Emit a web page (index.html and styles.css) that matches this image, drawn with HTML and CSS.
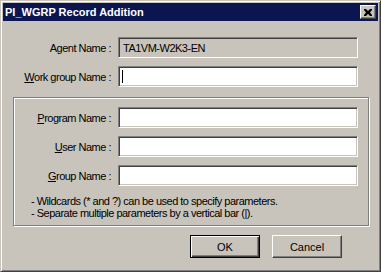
FILE: index.html
```html
<!DOCTYPE html>
<html lang="en">
<head>
    <meta charset="UTF-8">
    <title>PI_WGRP Record Addition</title>
    <link rel="stylesheet" href="styles.css">
</head>
<body>
    <div class="window">
        <div class="titlebar">
            <span class="title">PI_WGRP Record Addition</span>
            <span class="close">
                <svg width="8" height="7" viewBox="0 0 8 7">
                    <path d="M0 0h2l2 2 2-2h2v1L6 3.5 8 6v1H6L4 5 2 7H0V6l2-2.5L0 1z" fill="#000"/>
                </svg>
            </span>
        </div>

        <div class="content">
            <div class="form-grid top">
                <label class="lbl">Agent Name :</label>
                <div class="field disabled">TA1VM-W2K3-EN</div>

                <label class="lbl"><u>W</u>ork group Name :</label>
                <div class="field"><span class="caret"></span></div>
            </div>

            <div class="group">
                <div class="form-grid inner">
                    <label class="lbl"><u>P</u>rogram Name :</label>
                    <div class="field"></div>

                    <label class="lbl"><u>U</u>ser Name :</label>
                    <div class="field"></div>

                    <label class="lbl"><u>G</u>roup Name :</label>
                    <div class="field"></div>
                </div>
                <p class="note">- Wildcards (* and ?) can be used to specify parameters.<br>- Separate multiple parameters by a vertical bar (|).</p>
            </div>

            <div class="buttons">
                <div class="btn default"><span>OK</span></div>
                <div class="btn"><span>Cancel</span></div>
            </div>
        </div>
    </div>
</body>
</html>
```

FILE: styles.css
```css
body {
    margin: 0;
    font-family: "Liberation Sans", Arial, sans-serif;
    font-size: 11px;
    color: #000;
    background: #c8c4bc;
}
.window {
    width: 381px;
    height: 272px;
    box-sizing: border-box;
    padding: 2px;
    background: #c8c4bc;
    border: 1px solid;
    border-color: #c8c4bc #404040 #404040 #c8c4bc;
    box-shadow: inset 1px 1px #fff, inset -1px -1px #808080;
}
.titlebar {
    height: 18px;
    background: #0b1650;
    display: flex;
    align-items: center;
    justify-content: space-between;
    padding: 0 2px 0 2px;
}
.title {
    color: #fff;
    font-weight: bold;
    font-size: 11px;
}
.close {
    width: 16px;
    height: 14px;
    box-sizing: border-box;
    background: #c8c4bc;
    border: 1px solid;
    border-color: #fff #404040 #404040 #fff;
    box-shadow: inset -1px -1px #808080;
    display: flex;
    align-items: center;
    justify-content: center;
}
.content {
    padding: 16px 9px 0 10px;
}
.form-grid {
    display: grid;
    grid-auto-rows: 21px;
    row-gap: 8px;
    column-gap: 7px;
    align-items: center;
}
.form-grid.top {
    grid-template-columns: 98px 240px;
}
.form-grid.inner {
    grid-template-columns: 96px 240px;
}
.lbl {
    text-align: right;
    letter-spacing: -0.5px;
    white-space: nowrap;
}
.field {
    height: 21px;
    box-sizing: border-box;
    background: #fff;
    border: 1px solid;
    border-color: #808080 #fff #fff #808080;
    box-shadow: inset 1px 1px #404040, inset -1px -1px #c8c4bc;
    padding: 0 4px;
    display: flex;
    align-items: center;
    letter-spacing: -0.5px;
}
.field.disabled {
    background: #c8c4bc;
}
.caret {
    width: 1px;
    height: 13px;
    background: #000;
    margin-left: -1px;
}
.group {
    margin-top: 10px;
    border: 1px solid #808080;
    box-shadow: inset 1px 1px #fff, 1px 1px #fff;
    padding: 9px 9px 5px 1px;
    width: 356px;
    box-sizing: border-box;
    height: 129px;
}
.note {
    margin: 9px 0 0 16px;
    line-height: 12px;
    letter-spacing: -0.5px;
}
.buttons {
    display: flex;
    justify-content: flex-end;
    gap: 12px;
    margin-top: 9px;
    padding-right: 27px;
}
.btn {
    width: 70px;
    height: 23px;
    box-sizing: border-box;
    border: 1px solid;
    border-color: #fff #404040 #404040 #fff;
    box-shadow: inset -1px -1px #808080;
    display: flex;
    align-items: center;
    justify-content: center;
}
.btn.default {
    border-color: #000;
    box-shadow: inset 1px 1px #fff, inset -1px -1px #404040, inset -2px -2px #808080;
}
```
